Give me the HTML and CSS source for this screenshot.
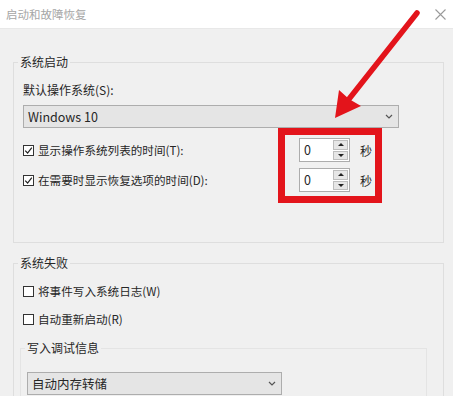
FILE: index.html
```html
<!DOCTYPE html>
<html lang="zh-CN">
<head>
    <meta charset="UTF-8">
    <title>启动和故障恢复</title>
    <link rel="stylesheet" href="styles.css">
</head>
<body>
    <div class="window">
        <div class="titlebar">
            <span class="title">启动和故障恢复</span>
            <svg class="close" width="11" height="11" viewBox="0 0 11 11">
                <path d="M0.5 0.5 L10.5 10.5 M10.5 0.5 L0.5 10.5" stroke="#9a9a9a" stroke-width="1.1" fill="none"/>
            </svg>
        </div>

        <div class="content">
            <fieldset class="group startup">
                <legend>系统启动</legend>
                <span class="field-label">默认操作系统(S):</span>
                <div class="select os">
                    <span>Windows 10</span>
                    <svg width="8" height="5" viewBox="0 0 8 5"><polyline points="1,1 4,4 7,1" stroke="#555" stroke-width="1.2" fill="none"/></svg>
                </div>
                <div class="timers">
                    <div class="timer-row">
                        <label class="check wide">
                            <span class="box"><svg width="9" height="9" viewBox="0 0 9 9"><path d="M1.2 4.6 L3.6 7 L7.8 1.6" stroke="#222" stroke-width="1.2" fill="none"/></svg></span>
                            显示操作系统列表的时间(T):
                        </label>
                        <div class="spin">
                            <span class="spin-value">0</span>
                            <span class="spin-btns"><span class="up"></span><span class="down"></span></span>
                        </div>
                        <span class="unit">秒</span>
                    </div>
                    <div class="timer-row">
                        <label class="check wide">
                            <span class="box"><svg width="9" height="9" viewBox="0 0 9 9"><path d="M1.2 4.6 L3.6 7 L7.8 1.6" stroke="#222" stroke-width="1.2" fill="none"/></svg></span>
                            在需要时显示恢复选项的时间(D):
                        </label>
                        <div class="spin">
                            <span class="spin-value">0</span>
                            <span class="spin-btns"><span class="up"></span><span class="down"></span></span>
                        </div>
                        <span class="unit">秒</span>
                    </div>
                </div>
            </fieldset>

            <fieldset class="group failure">
                <legend>系统失败</legend>
                <label class="check">
                    <span class="box"></span>
                    将事件写入系统日志(W)
                </label>
                <label class="check second">
                    <span class="box"></span>
                    自动重新启动(R)
                </label>
                <fieldset class="subgroup">
                    <legend>写入调试信息</legend>
                    <div class="select dump">
                        <span>自动内存转储</span>
                        <svg width="8" height="5" viewBox="0 0 8 5"><polyline points="1,1 4,4 7,1" stroke="#555" stroke-width="1.2" fill="none"/></svg>
                    </div>
                </fieldset>
            </fieldset>
        </div>

        <!-- annotation -->
        <div class="highlight"></div>
        <svg class="arrow" width="453" height="396" viewBox="0 0 453 396">
            <line x1="417" y1="13" x2="349" y2="99" stroke="#e3141b" stroke-width="5.5" stroke-linecap="round"/>
            <polygon points="335,118 339,90 349,99 361,106" fill="#e3141b"/>
        </svg>
    </div>
</body>
</html>
```

FILE: styles.css
```css
body {
    margin: 0;
    font-family: "Noto Sans CJK SC", "Noto Sans", sans-serif;
    font-size: 12px;
    color: #262626;
}
.window {
    position: relative;
    width: 453px;
    height: 396px;
    overflow: hidden;
    background: #f0f0f0;
}
.titlebar {
    height: 28px;
    background: #fff;
    border-bottom: 1px solid #e8e8e8;
    display: flex;
    align-items: center;
    justify-content: space-between;
    padding: 0 7px 0 6px;
}
.title {
    color: #a6a6a6;
    font-size: 11.5px;
}
.content {
    padding: 26px 9px 0 13px;
}
.group {
    margin: 0;
    border: 1px solid #dedede;
    padding: 14px 9px 50px 9px;
}
.group legend {
    margin-left: -5px;
    padding: 0 2px;
    line-height: 14px;
}
.field-label {
    display: block;
    line-height: 14px;
}
.select {
    box-sizing: border-box;
    height: 23px;
    border: 1px solid #adadad;
    background: #e5e5e5;
    display: flex;
    align-items: center;
    justify-content: space-between;
    padding: 0 5px 0 4px;
    font-size: 12.5px;
}
.select.os {
    margin-top: 8px;
    width: 376px;
}
.timers {
    margin-top: 10px;
    display: flex;
    flex-direction: column;
    gap: 6px;
}
.timer-row {
    display: flex;
    align-items: center;
    height: 24px;
}
.check {
    display: flex;
    align-items: center;
    gap: 4px;
    height: 16px;
    font-size: 11.6px;
}
.check.wide {
    width: 276px;
}
.box {
    box-sizing: border-box;
    width: 11px;
    height: 11px;
    border: 1px solid #333;
    background: #fff;
    display: flex;
    align-items: center;
    justify-content: center;
}
.spin {
    box-sizing: border-box;
    display: flex;
    width: 51px;
    height: 24px;
    border: 1px solid #acacac;
    background: #fff;
}
.spin-value {
    flex: 1;
    padding-left: 4px;
    line-height: 22px;
    font-size: 12.5px;
}
.spin-btns {
    width: 15px;
    display: flex;
    flex-direction: column;
    gap: 1px;
    padding: 1px;
}
.spin-btns span {
    flex: 1;
    background: #e6e6e6;
    border: 1px solid #bdbdbd;
    display: flex;
    align-items: center;
    justify-content: center;
}
.spin-btns .up::after {
    content: "";
    border: 3px solid transparent;
    border-bottom: 3px solid #222;
    border-top: 0;
}
.spin-btns .down::after {
    content: "";
    border: 3px solid transparent;
    border-top: 3px solid #222;
    border-bottom: 0;
}
.unit {
    margin-left: 10px;
}
.failure {
    margin-top: 13px;
    padding-top: 13px;
}
.check.second {
    margin-top: 12px;
}
.subgroup {
    margin: 14px 7px 0 -3px;
    border: 1px solid #e4e4e4;
    padding: 17px 6px 20px 6px;
}
.subgroup legend {
    margin-left: -2px;
    padding: 0 2px;
    line-height: 14px;
}
.select.dump {
    width: 255px;
}
.highlight {
    position: absolute;
    left: 278px;
    top: 128px;
    width: 104px;
    height: 75px;
    box-sizing: border-box;
    border: 7px solid #e3141b;
}
.arrow {
    position: absolute;
    left: 0;
    top: 0;
    pointer-events: none;
}
```
